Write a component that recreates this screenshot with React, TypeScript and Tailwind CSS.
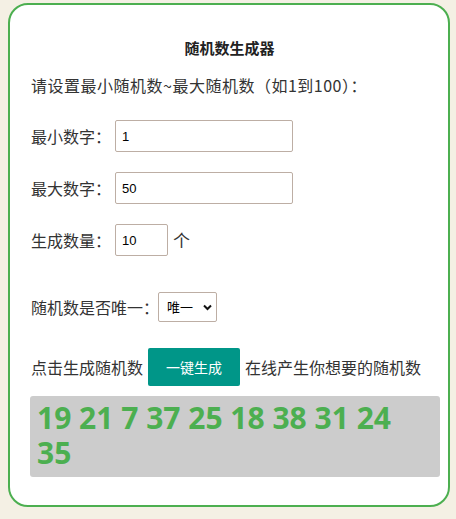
import { useState } from "react";

const cjk = "font-['Microsoft_YaHei','Noto_Sans_CJK_SC',sans-serif]";

export default function App() {
  const [min, setMin] = useState("1");
  const [max, setMax] = useState("50");
  const [count, setCount] = useState("10");
  const [unique, setUnique] = useState("1");
  const [result] = useState("19 21 7 37 25 18 38 31 24 35");

  return (
    <div className="min-h-[519px] w-[456px] bg-[#f4f0e4] pt-[3px] pl-[8px]">
      <div
        className={`${cjk} h-[504px] w-[442px] rounded-[20px] border-2 border-[#4caf50] bg-white pt-[32px] pl-[20px] pr-[8px] text-[#333]`}
      >
        <h1 className="h-[22px] pr-[11px] text-center text-[15px] leading-[22px] font-bold text-[#222]">
          随机数生成器
        </h1>
        <p className="mt-[14px] h-[24px] pl-px text-[16px] leading-[24px] tracking-[0.5px] whitespace-nowrap">
          请设置最小随机数~最大随机数（如1到100）：
        </p>

        <div className="mt-[23px] flex h-[32px] items-center pl-px">
          <span className="w-[84px] shrink-0 text-[16px] whitespace-nowrap">最小数字：</span>
          <input
            value={min}
            onChange={(e) => setMin(e.target.value)}
            className="h-[32px] w-[178px] rounded-[2px] border border-[#bdaea4] px-[6px] font-['Liberation_Sans',sans-serif] text-[13px] text-black outline-none"
          />
        </div>

        <div className="mt-[20px] flex h-[32px] items-center pl-px">
          <span className="w-[84px] shrink-0 text-[16px] whitespace-nowrap">最大数字：</span>
          <input
            value={max}
            onChange={(e) => setMax(e.target.value)}
            className="h-[32px] w-[178px] rounded-[2px] border border-[#bdaea4] px-[6px] font-['Liberation_Sans',sans-serif] text-[13px] text-black outline-none"
          />
        </div>

        <div className="mt-[20px] flex h-[32px] items-center pl-px">
          <span className="w-[84px] shrink-0 text-[16px] whitespace-nowrap">生成数量：</span>
          <input
            value={count}
            onChange={(e) => setCount(e.target.value)}
            className="h-[32px] w-[53px] rounded-[2px] border border-[#bdaea4] px-[6px] font-['Liberation_Sans',sans-serif] text-[13px] text-black outline-none"
          />
          <span className="ml-[5px] text-[17px]">个</span>
        </div>

        <div className="mt-[36px] flex h-[30px] items-center pl-px">
          <span className="w-[127px] shrink-0 text-[16px] whitespace-nowrap">随机数是否唯一：</span>
          <div className="relative h-[30px] w-[59px] shrink-0">
            <select
              value={unique}
              onChange={(e) => setUnique(e.target.value)}
              className="h-[30px] w-[59px] appearance-none rounded-[2px] border border-[#bdaea4] bg-white pl-[8px] text-[13px] text-black outline-none"
            >
              <option value="1">唯一</option>
              <option value="0">不唯一</option>
            </select>
            <svg
              className="pointer-events-none absolute top-[12px] left-[45px]"
              width="9"
              height="7"
              viewBox="0 0 9 7"
            >
              <path d="M1 1.5 L4.5 5 L8 1.5" fill="none" stroke="#111" strokeWidth="2" />
            </svg>
          </div>
        </div>

        <div className="mt-[26px] flex h-[38px] items-center pl-px text-[16px] whitespace-nowrap">
          <span>点击生成随机数</span>
          <button className="mx-[5px] h-[38px] w-[92px] shrink-0 rounded-[2px] bg-[#009688] text-[14px] text-white">
            一键生成
          </button>
          <span>在线产生你想要的随机数</span>
        </div>

        <div className="mt-[10px] h-[81px] w-[410px] rounded-[3px] bg-[#cccccc] px-[7px] pt-[4px] font-['Open_Sans',sans-serif] text-[30px] leading-[35px] font-bold text-[#4caf50]">
          {result}
        </div>
      </div>
    </div>
  );
}
